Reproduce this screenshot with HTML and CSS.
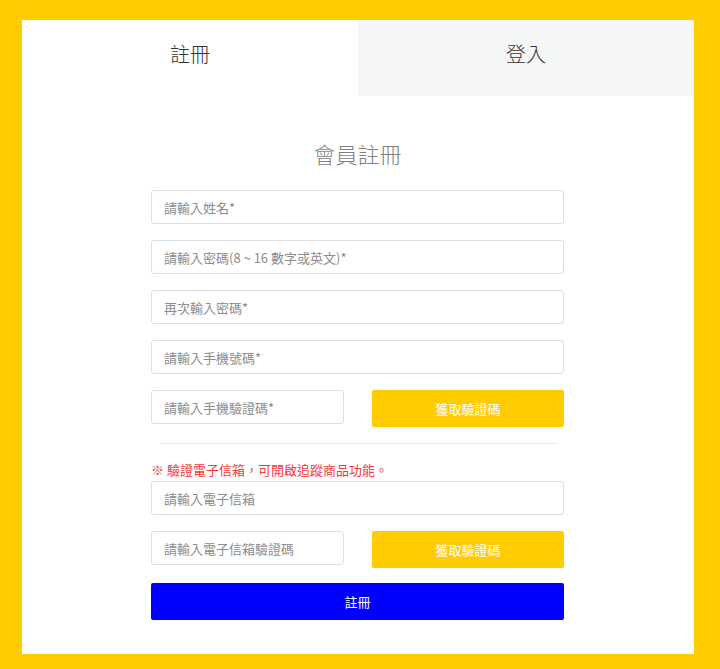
FILE: index.html
```html
<!DOCTYPE html>
<html lang="zh-Hant">
<head>
<meta charset="utf-8">
<title>會員註冊</title>
<link rel="stylesheet" href="styles.css">
</head>
<body>
<div class="card">
  <div class="tabs">
    <div class="tab tab-active">註冊</div>
    <div class="tab tab-idle">登入</div>
  </div>
  <form class="form">
    <h2 class="title">會員註冊</h2>
    <input class="field" type="text" placeholder="請輸入姓名*">
    <input class="field" type="password" placeholder="請輸入密碼(8 ~ 16 數字或英文)*">
    <input class="field" type="password" placeholder="再次輸入密碼*">
    <input class="field" type="text" placeholder="請輸入手機號碼*">
    <div class="pair">
      <input class="field" type="text" placeholder="請輸入手機驗證碼*">
      <button class="btn btn-yellow" type="button">獲取驗證碼</button>
    </div>
    <hr class="divider">
    <p class="notice">※ 驗證電子信箱，可開啟追蹤商品功能。</p>
    <input class="field field-email" type="text" placeholder="請輸入電子信箱">
    <div class="pair">
      <input class="field" type="text" placeholder="請輸入電子信箱驗證碼">
      <button class="btn btn-yellow" type="button">獲取驗證碼</button>
    </div>
    <button class="btn btn-blue" type="button">註冊</button>
  </form>
</div>
</body>
</html>
```
FILE: styles.css
```css
* { box-sizing: border-box; }
html, body {
  margin: 0;
  padding: 0;
}
body {
  background: #ffcc00;
  font-family: "Noto Sans CJK TC", "Noto Sans", sans-serif;
  padding: 20px 26px 15px 22px;
  height: 669px;
  overflow: hidden;
}
.card {
  width: 672px;
  height: 634px;
  background: #ffffff;
}
.tabs {
  display: grid;
  grid-template-columns: 336px 336px;
  height: 76px;
}
.tab {
  font-size: 20px;
  line-height: 28px;
  padding-top: 20px;
  text-align: center;
  color: #333333;
  font-weight: 300;
}
.tab-active { background: #ffffff; }
.tab-idle { background: #f5f6f6; }
.form {
  width: 413px;
  margin: 0 0 0 129px;
  display: flex;
  flex-direction: column;
}
.title {
  margin: 42px 0 22px;
  font-size: 22px;
  line-height: 30px;
  font-weight: 300;
  text-align: center;
  color: #7f7f7f;
}
.field {
  display: block;
  width: 100%;
  height: 34px;
  margin: 0 0 16px;
  padding: 0 12px;
  border: 1px solid #dcdfe3;
  border-radius: 3px;
  background: #fff;
  font-family: inherit;
  font-size: 13px;
  color: #555;
  outline: none;
}
.field::placeholder { color: #8c8c8c; }
.pair {
  display: grid;
  grid-template-columns: 193px 192px;
  column-gap: 28px;
  align-items: start;
}
.pair .field { margin: 0; }
.btn {
  display: block;
  height: 37px;
  border: none;
  border-radius: 2px;
  color: #ffffff;
  font-family: inherit;
  font-size: 13px;
  padding: 0;
}
.btn-yellow { background: #ffcc00; }
.btn-blue {
  background: #0000ff;
  width: 100%;
  margin-top: 15px;
}
.divider {
  margin: 16px 8px 0 9px;
  border: none;
  border-top: 1px solid #e8e8e8;
  height: 0;
}
.notice {
  margin: 17px 0 2px;
  font-size: 13px;
  line-height: 18px;
  color: #f23a3a;
}
.field-email { margin-bottom: 16px; }
```
